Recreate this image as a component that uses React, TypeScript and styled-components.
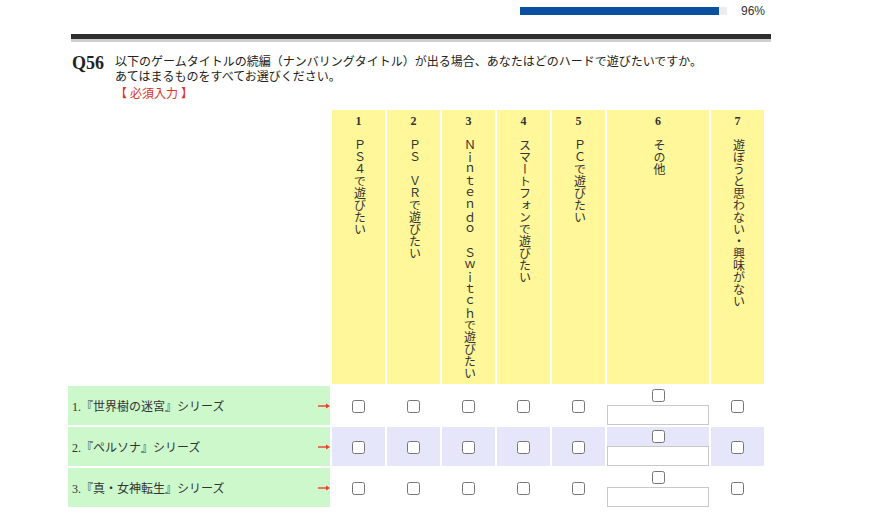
import React from 'react'
import styled, { createGlobalStyle } from 'styled-components'

const GlobalStyle = createGlobalStyle`
  body {
    margin: 0;
    background: #fff;
    font-family: 'Liberation Serif', 'Noto Sans CJK JP', serif;
    color: #222;
  }
`

const choices = [
  { no: 1, label: 'ＰＳ４で遊びたい' },
  { no: 2, label: 'ＰＳ　ＶＲで遊びたい' },
  { no: 3, label: 'Ｎｉｎｔｅｎｄｏ　Ｓｗｉｔｃｈで遊びたい' },
  { no: 4, label: 'スマートフォンで遊びたい' },
  { no: 5, label: 'ＰＣで遊びたい' },
  { no: 6, label: 'その他', other: true },
  { no: 7, label: '遊ぼうと思わない・興味がない' },
]

const titles = [
  '1.『世界樹の迷宮』シリーズ',
  '2.『ペルソナ』シリーズ',
  '3.『真・女神転生』シリーズ',
]

const Arrow = () => (
  <svg width="12" height="6" viewBox="0 0 12 6">
    <line x1="0" y1="3" x2="9" y2="3" stroke="#e8402a" strokeWidth="1.4" />
    <polygon points="8,0.6 12,3 8,5.4" fill="#e8402a" />
  </svg>
)

export default function App() {
  return (
    <>
      <GlobalStyle />
      <Wrapper>
        <ProgressRow>
          <Track>
            <Fill style={{ width: '96%' }} />
          </Track>
          <Percent>96%</Percent>
        </ProgressRow>
        <Rule />

        <Question>
          <QNo>Q56</QNo>
          <QText>
            以下のゲームタイトルの続編（ナンバリングタイトル）が出る場合、あなたはどのハードで遊びたいですか。
            <br />
            あてはまるものをすべてお選びください。
            <Required>【 必須入力 】</Required>
          </QText>
        </Question>

        <Matrix>
          <colgroup>
            <col style={{ width: 262 }} />
            {choices.map((c) => (
              <col key={c.no} style={{ width: c.other ? 102 : 53 }} />
            ))}
          </colgroup>
          <thead>
            <tr>
              <Corner />
              {choices.map((c) => (
                <HeadCell key={c.no}>
                  <HeadInner>
                    <HeadNo>{c.no}</HeadNo>
                    <VText>{c.label}</VText>
                  </HeadInner>
                </HeadCell>
              ))}
            </tr>
          </thead>
          <tbody>
            {titles.map((t, i) => (
              <tr key={t}>
                <LabelCell>
                  <LabelInner>
                    <span>{t}</span>
                    <Arrow />
                  </LabelInner>
                </LabelCell>
                {choices.map((c) => (
                  <CheckCell key={c.no} $alt={i === 1}>
                    {c.other ? (
                      <>
                        <OtherCheck type="checkbox" />
                        <OtherInput type="text" />
                      </>
                    ) : (
                      <Check type="checkbox" />
                    )}
                  </CheckCell>
                ))}
              </tr>
            ))}
          </tbody>
        </Matrix>
      </Wrapper>
    </>
  )
}

const Wrapper = styled.div`
  margin-left: 66px;
  width: 705px;
  padding-top: 7px;
`

const ProgressRow = styled.div`
  display: flex;
  justify-content: flex-end;
  align-items: center;
  gap: 14px;
  height: 8px;
  padding-right: 6px;
`

const Track = styled.div`
  width: 207px;
  height: 8px;
  background: #ececec;
`

const Fill = styled.div`
  height: 100%;
  background: #0a4fa0;
`

const Percent = styled.span`
  font-family: 'Liberation Sans', Arial, sans-serif;
  font-size: 12px;
  color: #333;
`

const Rule = styled.div`
  margin: 19px 0 0 5px;
  width: 700px;
  border-top: 5px solid #2f2f2f;
  border-bottom: 3px solid #cfcfcf;
`

const Question = styled.div`
  display: flex;
  align-items: flex-start;
  gap: 11px;
  padding: 13px 0 0 6px;
`

const QNo = styled.div`
  margin-top: -2px;
  font-size: 18px;
  font-weight: bold;
  line-height: 20px;
  color: #222;
`

const QText = styled.div`
  font-size: 12px;
  line-height: 15px;
  color: #222;
`

const Required = styled.span`
  display: block;
  margin-top: 2px;
  color: #e0302a;
`

const Matrix = styled.table`
  margin-top: 6px;
  width: 700px;
  table-layout: fixed;
  border-collapse: separate;
  border-spacing: 2px;
`

const Corner = styled.th`
  padding: 0;
`

const HeadCell = styled.th`
  padding: 4px 0 5px;
  vertical-align: top;
  background: #fff799;
  font-weight: normal;
  color: #333;
`

const HeadInner = styled.div`
  display: flex;
  flex-direction: column;
  align-items: center;
`

const HeadNo = styled.div`
  font-size: 12px;
  font-weight: bold;
  line-height: 15px;
`

const VText = styled.div`
  margin-top: 10px;
  writing-mode: vertical-rl;
  font-size: 12px;
  line-height: 14px;
`

const LabelCell = styled.td`
  height: 39px;
  padding: 0 0 0 4px;
  background: #ccf8cc;
  font-size: 12px;
  color: #333;
`

const LabelInner = styled.div`
  display: flex;
  align-items: center;
  justify-content: space-between;
`

const CheckCell = styled.td<{ $alt?: boolean }>`
  height: 39px;
  padding: 0;
  text-align: center;
  vertical-align: middle;
  background: ${(p) => (p.$alt ? '#e6e6fa' : '#fff')};
`

const Check = styled.input`
  margin: 0;
  width: 13px;
  height: 13px;
  vertical-align: middle;
`

const OtherCheck = styled.input`
  display: block;
  margin: 3px auto 3px;
  width: 13px;
  height: 13px;
`

const OtherInput = styled.input`
  display: block;
  box-sizing: border-box;
  width: 100%;
  height: 20px;
  margin: 0;
  padding: 0 2px;
  border: 1px solid #c8c8c8;
  background: #fff;
`
